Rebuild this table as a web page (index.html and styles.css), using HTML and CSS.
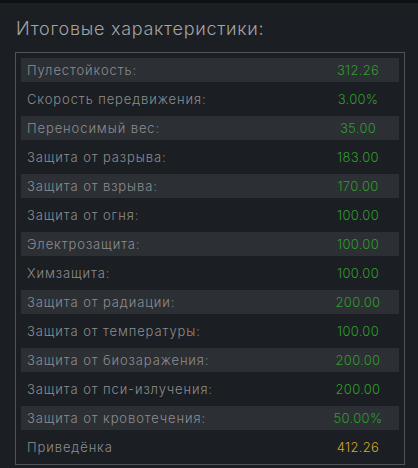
FILE: index.html
```html
<!DOCTYPE html>
<html lang="ru">
<head>
<meta charset="utf-8">
<link rel="stylesheet" href="styles.css">
</head>
<body>
<div class="topbar"></div>
<div class="panel">
  <h2 class="title">Итоговые характеристики:</h2>
  <div class="box">
    <div class="row alt"><span class="label">Пулестойкость:</span><span class="value">312.26</span></div>
    <div class="row"><span class="label">Скорость передвижения:</span><span class="value">3.00%</span></div>
    <div class="row alt"><span class="label">Переносимый вес:</span><span class="value">35.00</span></div>
    <div class="row"><span class="label">Защита от разрыва:</span><span class="value">183.00</span></div>
    <div class="row alt"><span class="label">Защита от взрыва:</span><span class="value">170.00</span></div>
    <div class="row"><span class="label">Защита от огня:</span><span class="value">100.00</span></div>
    <div class="row alt"><span class="label">Электрозащита:</span><span class="value">100.00</span></div>
    <div class="row"><span class="label">Химзащита:</span><span class="value">100.00</span></div>
    <div class="row alt"><span class="label">Защита от радиации:</span><span class="value">200.00</span></div>
    <div class="row"><span class="label">Защита от температуры:</span><span class="value">100.00</span></div>
    <div class="row alt"><span class="label">Защита от биозаражения:</span><span class="value">200.00</span></div>
    <div class="row"><span class="label">Защита от пси-излучения:</span><span class="value">200.00</span></div>
    <div class="row alt"><span class="label">Защита от кровотечения:</span><span class="value">50.00%</span></div>
    <div class="row"><span class="label">Приведёнка</span><span class="value gold">412.26</span></div>
  </div>
</div>
</body>
</html>
```

FILE: styles.css
```css
* { box-sizing: border-box; }
html, body { margin: 0; padding: 0; }
body {
  background: #1b1e22;
  font-family: "Inter", "Noto Sans", sans-serif;
  width: 418px;
  height: 468px;
  overflow: hidden;
}
.topbar {
  height: 3px;
  background: #0e1013;
}
.panel {
  padding: 17px 13px 0 15px;
}
.title {
  margin: 0 0 14px 1px;
  font-size: 18px;
  font-weight: 300;
  line-height: 18px;
  color: #a3a3a3;
  letter-spacing: 0.7px;
}
.box {
  border: 1px solid #505357;
  padding: 5px;
  display: flex;
  flex-direction: column;
  gap: 5px;
  width: 390px;
}
.row {
  height: 24px;
  display: flex;
  align-items: center;
  padding-left: 6px;
  font-size: 13px;
  font-weight: 300;
}
.row.alt { background: #2c2f34; }
.label {
  flex: 1;
  color: #8b8d90;
  letter-spacing: 0.9px;
}
.value {
  width: 80px;
  text-align: center;
  color: #2f9e2a;
  margin-right: 1px;
  letter-spacing: 0.3px;
}
.value.gold { color: #d3a52c; }
```
